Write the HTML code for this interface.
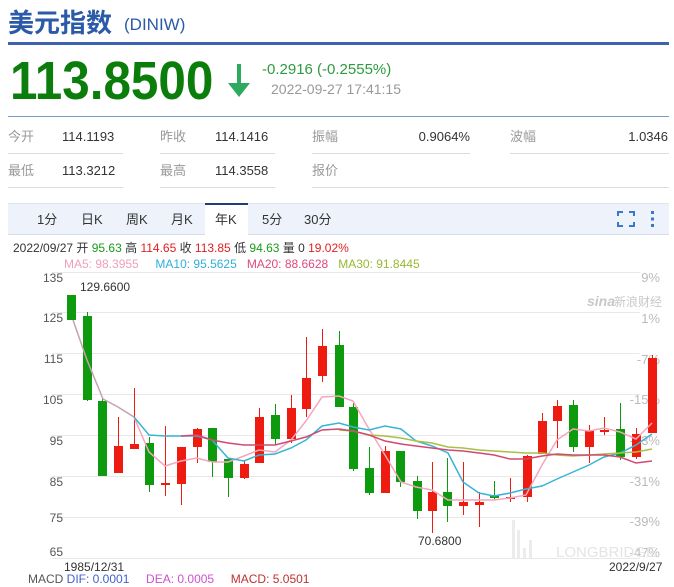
<!DOCTYPE html>
<html><head><meta charset="utf-8"><style>
*{margin:0;padding:0;box-sizing:border-box}
body{width:674px;height:575px;overflow:hidden;background:#fff;font-family:"Liberation Sans","Noto Sans CJK SC",sans-serif;position:relative;color:#333}
.a{position:absolute;white-space:nowrap}
</style></head><body>
<div class="a" style="left:8px;top:6px;font-size:26px;font-weight:bold;color:#2b5aa8;line-height:34px">美元指数</div>
<div class="a" style="left:124px;top:14px;font-size:17px;color:#2b5aa8;line-height:22px">(DINIW)</div>
<div class="a" style="left:8px;top:42px;width:661px;height:3px;background:#3c62b0"></div>
<div class="a" style="left:10px;top:50px;font-size:54px;font-weight:bold;color:#0b7d0b;line-height:62px;transform:scaleX(0.915);transform-origin:left">113.8500</div>
<svg class="a" style="left:226px;top:62px" width="26" height="38"><path d="M13 2V32" stroke="#2fa860" stroke-width="4"/><path d="M2 21L13 35L24 21Z" fill="#2fa860"/></svg>
<div class="a" style="left:262px;top:61px;font-size:15px;color:#2e9a40;line-height:18px">-0.2916 (-0.2555%)</div>
<div class="a" style="left:271px;top:81px;font-size:14px;color:#999;line-height:17px">2022-09-27 17:41:15</div>
<div class="a" style="left:8px;top:116px;width:661px;height:1px;background:#7a9cc8"></div>
<div style="font-size:13px;line-height:16px">
<div class="a" style="left:8px;top:129px;color:#999">今开</div><div class="a" style="left:62px;top:129px">114.1193</div>
<div class="a" style="left:160px;top:129px;color:#999">昨收</div><div class="a" style="left:215px;top:129px">114.1416</div>
<div class="a" style="left:312px;top:129px;color:#999">振幅</div><div class="a" style="left:400px;top:129px;width:70px;text-align:right">0.9064%</div>
<div class="a" style="left:510px;top:129px;color:#999">波幅</div><div class="a" style="left:598px;top:129px;width:70px;text-align:right">1.0346</div>
<div class="a" style="left:8px;top:163px;color:#999">最低</div><div class="a" style="left:62px;top:163px">113.3212</div>
<div class="a" style="left:160px;top:163px;color:#999">最高</div><div class="a" style="left:215px;top:163px">114.3558</div>
<div class="a" style="left:312px;top:163px;color:#999">报价</div>
</div>
<div class="a" style="left:8px;top:153px;width:115px;height:1px;background:#ddd"></div>
<div class="a" style="left:160px;top:153px;width:115px;height:1px;background:#ddd"></div>
<div class="a" style="left:312px;top:153px;width:158px;height:1px;background:#ddd"></div>
<div class="a" style="left:510px;top:153px;width:159px;height:1px;background:#ddd"></div>
<div class="a" style="left:8px;top:187px;width:115px;height:1px;background:#ddd"></div>
<div class="a" style="left:160px;top:187px;width:115px;height:1px;background:#ddd"></div>
<div class="a" style="left:312px;top:187px;width:357px;height:1px;background:#ddd"></div>
<div class="a" style="left:8px;top:203px;width:661px;height:32px;background:#eef3fb;border-top:1px solid #e0e6f0;border-bottom:1px solid #d6deea"></div>
<div class="a" style="left:205px;top:203px;width:43px;height:32px;background:#fff;border-top:2px solid #1f3d78"></div>
<div class="a" style="top:212px;font-size:13px;line-height:16px;color:#333;left:0">
<span class="a" style="left:37px">1分</span><span class="a" style="left:81px">日K</span><span class="a" style="left:126px">周K</span><span class="a" style="left:171px">月K</span><span class="a" style="left:215px">年K</span><span class="a" style="left:262px">5分</span><span class="a" style="left:304px">30分</span></div>
<svg class="a" style="left:617px;top:210px" width="45" height="18"><path d="M1 6V2H6M12 2H17V6M17 12V16H12M6 16H1V12" fill="none" stroke="#3a78c8" stroke-width="2"/><rect x="34" y="1" width="3" height="3" fill="#3a78c8"/><rect x="34" y="7.5" width="3" height="3" fill="#3a78c8"/><rect x="34" y="14" width="3" height="3" fill="#3a78c8"/></svg>
<div class="a" style="left:13px;top:241px;font-size:12px;line-height:15px;color:#333">2022/09/27 开 <span style="color:#1a9a1a">95.63</span> 高 <span style="color:#e02020">114.65</span> 收 <span style="color:#e02020">113.85</span> 低 <span style="color:#1a9a1a">94.63</span> 量 0 <span style="color:#e02020">19.02%</span></div>
<div class="a" style="left:64px;top:257px;font-size:12px;line-height:15px"><span style="color:#f0a0b8">MA5: 98.3955</span>&nbsp;&nbsp;&nbsp;&nbsp; <span style="color:#30b0d8">MA10: 95.5625</span>&nbsp;&nbsp; <span style="color:#e04880">MA20: 88.6628</span>&nbsp;&nbsp; <span style="color:#98b830">MA30: 91.8445</span></div>
<div class="a" style="left:28px;top:572px;font-size:12px;line-height:15px;color:#555">MACD <span style="color:#4060d0">DIF: 0.0001</span>&nbsp;&nbsp;&nbsp;&nbsp; <span style="color:#d050d0">DEA: 0.0005</span>&nbsp;&nbsp;&nbsp;&nbsp; <span style="color:#c03030">MACD: 5.0501</span></div>
<svg class="a" style="left:0;top:0" width="674" height="575" font-family="Liberation Sans, sans-serif" font-size="12">
<g stroke="#e8e8e8" stroke-width="1">
<path d="M52 272.5H640M52 312.5H640M52 353.5H640M52 394.5H640M52 435.5H640M52 476.5H640M52 517.5H640M52 558.5H640"/></g>
<g fill="#555" text-anchor="end"><text x="63" y="282">135</text><text x="63" y="322">125</text><text x="63" y="363">115</text><text x="63" y="404">105</text><text x="63" y="445">95</text><text x="63" y="486">85</text><text x="63" y="522">75</text><text x="63" y="556">65</text></g>
<g fill="#bbb" text-anchor="end" font-size="13"><text x="660" y="282">9%</text><text x="660" y="323">1%</text><text x="660" y="364">-7%</text><text x="660" y="404">-15%</text><text x="660" y="445">-23%</text><text x="660" y="486">-31%</text><text x="660" y="526">-39%</text><text x="660" y="557">-47%</text></g>
<text x="80" y="291" fill="#333">129.6600</text>
<text x="418" y="545" fill="#333">70.6800</text>
<text x="587" y="306" fill="#c8c8c8" font-size="14" font-style="italic" font-weight="bold">sina</text><text x="614" y="306" fill="#c8c8c8" font-size="12" font-family="Noto Sans CJK SC">新浪财经</text>
<text x="556" y="557" fill="#e4e4e4" font-size="15">LONGBRIDGE</text>
<g fill="#ececec"><rect x="512" y="520" width="3" height="38"/><rect x="517" y="530" width="3" height="28"/><rect x="523" y="548" width="3" height="10"/><rect x="529" y="540" width="3" height="18"/></g>
<text x="64" y="571" fill="#333">1985/12/31</text><text x="609" y="571" fill="#333">2022/9/27</text>
<g id="c"></g>
<polyline fill="none" stroke="#c8a0b0" stroke-width="1.5" points="73,320 87,360 103,399 118,407 134,417"/>
<polyline fill="none" stroke="#f4a6bc" stroke-width="1.5" points="134,417 149,452 165,466 181,461 197,458 212,462 228,462 244,456 259,450 275,452 291,440 306,421 322,397 339,396 353,401 369,429 385,455 401,482 416,487 432,490 448,500 463,500 479,500 494,500 510,498 526,495 542,465 557,440 573,429 589,431 604,428 620,432 636,439 652,423"/>
<polyline fill="none" stroke="#38b4d4" stroke-width="1.5" points="134,417 149,435 165,436 181,436 197,436 212,440 228,458 244,461 259,455 275,454 291,448 306,440 322,426 339,423 353,427 369,430 385,426 401,429 416,441 432,446 448,453 463,482 479,493 494,496 510,493 526,489 542,486 557,479 573,472 589,465 604,457 620,453 636,445 652,434"/>
<polyline fill="none" stroke="#a8c048" stroke-width="1.5" points="339,430 353,431 369,435 385,436 401,438 416,441 432,443 448,447 463,448 479,450 494,451 510,452 526,453 542,453 557,455 573,456 589,455 604,454 620,453 636,452 652,449"/>
<polyline fill="none" stroke="#d04a70" stroke-width="1.5" points="181,436 197,435 212,440 228,443 244,445 259,445 275,445 291,441 306,437 322,430 339,429 353,431 369,435 385,441 401,444 416,446 432,448 448,450 463,451 479,453 494,455 510,459 526,459 542,456 557,454 573,455 589,455 604,455 620,457 636,463 652,461"/>
</svg>
<script>
var d=[[71,295,320,295,320,'g'],[87,316,400,312,401,'g'],[102,401,476,398,476,'g'],[118,446,473,417,473,'r'],[134,444,449,388,449,'r'],[149,443,485,437,492,'g'],[165,483,485,426,496,'r'],[181,447,484,447,505,'r'],[197,429,447,428,463,'r'],[212,428,462,428,477,'g'],[228,459,478,459,497,'g'],[244,464,478,460,479,'r'],[259,417,463,408,463,'r'],[275,415,439,404,445,'g'],[291,408,439,395,443,'r'],[306,378,409,337,417,'r'],[322,346,376,329,382,'r'],[339,345,407,331,407,'g'],[353,407,469,403,471,'g'],[369,468,493,447,495,'g'],[385,451,493,446,493,'r'],[400,451,482,451,487,'g'],[417,481,511,476,519,'g'],[432,492,511,462,533,'r'],[447,492,506,458,522,'g'],[463,502,506,462,515,'r'],[479,502,505,492,527,'r'],[494,495,498,481,500,'g'],[510,497,498,478,502,'r'],[527,456,497,455,502,'r'],[542,421,454,413,454,'r'],[557,406,421,400,448,'r'],[573,405,447,400,452,'g'],[589,431,447,425,463,'r'],[604,430,432,417,435,'r'],[620,429,457,403,460,'g'],[636,434,457,428,459,'r'],[652,358,433,355,433,'r']];
var s='';d.forEach(function(c){var col=c[5]=='g'?'#0e9a0e':'#ee1c10';var h=Math.max(c[2]-c[1],2);s+='<line x1="'+(c[0]+.5)+'" x2="'+(c[0]+.5)+'" y1="'+c[3]+'" y2="'+c[4]+'" stroke="'+col+'"/><rect x="'+(c[0]-4)+'" y="'+c[1]+'" width="9" height="'+h+'" fill="'+col+'"/>';});
document.getElementById('c').innerHTML=s;
</script>
</body></html>
